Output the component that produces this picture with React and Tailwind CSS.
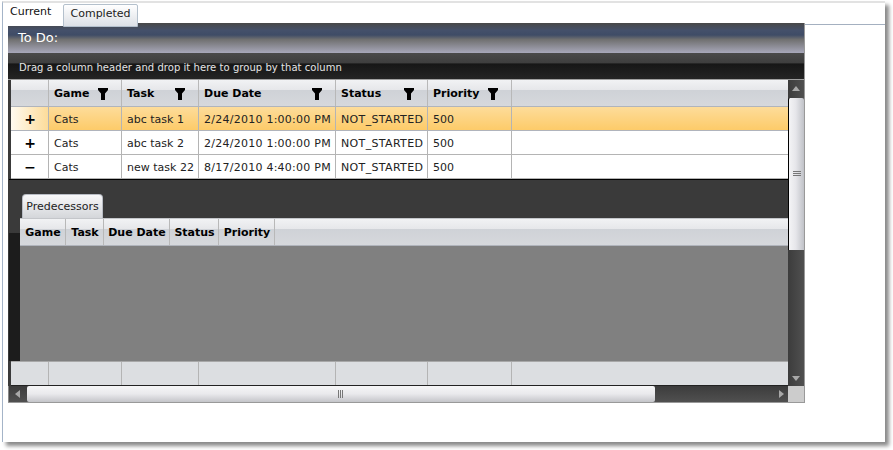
const COLS = "grid grid-cols-[38px_73px_77px_137px_92px_84px_1fr]";

function Funnel() {
  return (
    <svg width="14" height="14" viewBox="0 0 14 14" className="shrink-0">
      <path d="M2 1h10v2L9 6.5V13H5V6.5L2 3z" fill="#000" />
    </svg>
  );
}

function Tri({ d }) {
  return (
    <svg width="10" height="10" viewBox="0 0 10 10">
      <path d={d} fill="#a8a8a8" />
    </svg>
  );
}

const headers = [
  ["Game", "w-[73px]"],
  ["Task", "w-[77px]"],
  ["Due Date", "w-[137px]"],
  ["Status", "w-[92px]"],
  ["Priority", "w-[84px]"],
];

const rows = [
  { sign: "+", task: "abc task 1", date: "2/24/2010 1:00:00 PM", sel: true },
  { sign: "+", task: "abc task 2", date: "2/24/2010 1:00:00 PM" },
  { sign: "−", task: "new task 22", date: "8/17/2010 4:40:00 PM" },
];

const innerHeaders = [
  ["Game", "w-[46px]"],
  ["Task", "w-[38px]"],
  ["Due Date", "w-[66px]"],
  ["Status", "w-[49px]"],
  ["Priority", "w-[56px]"],
];

const HEAD_BG =
  "bg-[linear-gradient(to_bottom,#f1f2f4_0%,#e6e7ea_38%,#cfd2d7_40%,#d6d8dc_100%)]";

export default function App() {
  return (
    <div className="w-[893px] h-[450px] bg-white overflow-hidden font-['DejaVu_Sans',sans-serif] text-[11px] text-[#222]">
      <div className="ml-[2px] mt-px w-[883px] h-[441px] bg-white border-l border-[#a4b4c8] border-t-2 border-t-[#e2e2e2] shadow-[4px_4px_4px_#8a8a8a]">
        <div className="flex h-[20px] relative z-10 items-start">
          <div className="w-[60px] h-[23px] bg-white pl-[7px] pt-[1px] text-[11px] text-[#111]">Current</div>
          <div className="w-[75px] h-[23px] mt-px rounded-t-[2px] border border-[#b4c0cc] bg-[linear-gradient(to_bottom,#ffffff,#dde0e5)] text-center pt-[1px] text-[#222]">
            Completed
          </div>
        </div>
        <div className="flex">
          <div className="ml-[5px] w-[797px] h-[380px] shrink-0 border-r border-b border-[#999] flex flex-col">
            <div className="h-[30px] shrink-0 pl-[10px] pt-[5px] text-[13px] text-white bg-[linear-gradient(to_bottom,#484848_0%,#44506a_25%,#3f4c66_40%,#707070_55%,#a8a8ba_100%)]">
              To Do:
            </div>
            <div className="h-[27px] shrink-0 pl-[11px] pt-[7px] text-[10px] tracking-[0.05px] text-[#e4e4e4] border-b border-[#a0a0a0] bg-[linear-gradient(to_bottom,#4a4a4a_0%,#3e3e3e_38%,#161616_42%,#242424_100%)]">
              Drag a column header and drop it here to group by that column
            </div>
            <div className="flex h-[306px] shrink-0">
              <div className="w-[780px] shrink-0 flex flex-col border-l-[3px] border-l-[#3a3a3a]">
                <div className={`h-[27px] shrink-0 border-b border-[#b0b4bc] flex ${HEAD_BG}`}>
                  <div className="w-[38px] border-r border-[#b8b8b8] shrink-0" />
                  {headers.map(([t, w]) => (
                    <div key={t} className={`${w} shrink-0 border-r border-[#b8b8b8] flex items-center justify-between pl-[5px] pr-[11px] pt-[2px] font-bold text-black`}>
                      <span>{t}</span>
                      <Funnel />
                    </div>
                  ))}
                </div>
                {rows.map((r) => (
                  <div
                    key={r.task}
                    className={`${COLS} h-[24px] shrink-0 border-b ${r.sel ? "border-[#b0b4bc] bg-[linear-gradient(to_bottom,#fddc9a,#fdcb69)]" : "border-[#b4b4b4] bg-white"} last:border-b-0`}
                  >
                    <div className={`border-r border-[#b4b4b4] flex items-center justify-center pl-px pt-px text-[14px] font-bold text-black ${r.sel ? "bg-[linear-gradient(to_right,#fffaf0,#fddc9a)]" : ""}`}>
                      {r.sign}
                    </div>
                    <div className="border-r border-[#b4b4b4] flex items-center pl-[5px] pt-[3px]">Cats</div>
                    <div className="border-r border-[#b4b4b4] flex items-center pl-[5px] pt-[3px] whitespace-nowrap">{r.task}</div>
                    <div className="border-r border-[#b4b4b4] flex items-center pl-[5px] pt-[3px] whitespace-nowrap tracking-[0.25px]">{r.date}</div>
                    <div className="border-r border-[#b4b4b4] flex items-center pl-[5px] pt-[3px] tracking-[0.35px]">NOT_STARTED</div>
                    <div className="border-r border-[#b4b4b4] flex items-center pl-[5px] pt-[3px]">500</div>
                    <div />
                  </div>
                ))}
                <div className="h-[182px] shrink-0 -ml-[2px] border-t border-black bg-[linear-gradient(to_bottom,#3a3a3a_0%,#3a3a3a_29%,#1c1c1c_29.5%,#1c1c1c_100%)] flex">
                  <div className="w-[11px] shrink-0" />
                  <div className="flex-1 flex flex-col bg-[#3a3a3a]">
                    <div className="h-[38px] shrink-0 flex items-end pl-[2px]">
                      <div className="w-[81px] h-[24px] rounded-t-[4px] border border-[#b8bcc4] border-b-0 bg-[linear-gradient(to_bottom,#f8f8f9,#d4d6da)] flex items-center justify-center pt-[2px] text-[#222]">
                        Predecessors
                      </div>
                    </div>
                    <div className={`h-[28px] shrink-0 flex border-b border-[#b0b4bc] border-t border-t-[#c4c6ca] ${HEAD_BG}`}>
                      {innerHeaders.map(([t, w]) => (
                        <div key={t} className={`${w} shrink-0 border-r border-[#b8b8b8] flex items-center justify-center pl-px pt-[2px] font-bold text-black whitespace-nowrap`}>
                          {t}
                        </div>
                      ))}
                    </div>
                    <div className="flex-1 bg-[#808080]" />
                  </div>
                </div>
                <div className={`${COLS} h-[25px] shrink-0 bg-[#dcdee1] border-t border-[#a8a8a8] border-b border-b-[#222]`}>
                  {[0, 1, 2, 3, 4, 5].map((i) => (
                    <div key={i} className="border-r border-[#b4b4b4]" />
                  ))}
                  <div />
                </div>
              </div>
              <div className="w-[16px] shrink-0 flex flex-col bg-[linear-gradient(to_right,#3c3c3c,#505050)]">
                <div className="h-[18px] shrink-0 flex items-center justify-center">
                  <Tri d="M5 2L9 7H1z" />
                </div>
                <div className="h-[152px] shrink-0 rounded-t-[2px] border-l border-black bg-[linear-gradient(to_right,#f4f4f6,#e6e6ea_45%,#c0c2c8)] flex items-center justify-center">
                  <svg width="8" height="6" viewBox="0 0 8 6">
                    <path d="M0 .5h8M0 2.5h8M0 4.5h8" stroke="#777" strokeWidth="1" />
                  </svg>
                </div>
                <div className="flex-1" />
                <div className="h-[16px] shrink-0 flex items-center justify-center">
                  <Tri d="M1 3h8L5 8z" />
                </div>
              </div>
            </div>
            <div className="flex h-[16px] shrink-0 bg-[linear-gradient(to_bottom,#3c3c3c,#505050)] border-l border-[#888]">
              <div className="w-[18px] shrink-0 flex items-center justify-center">
                <Tri d="M7 1v8L2 5z" />
              </div>
              <div className="w-[628px] shrink-0 rounded-[2px] bg-[linear-gradient(to_bottom,#f6f6f7,#e9e9ec_50%,#c4c5c9)] flex items-center justify-center">
                <svg width="6" height="8" viewBox="0 0 6 8">
                  <path d="M.5 0v8M2.5 0v8M4.5 0v8" stroke="#777" strokeWidth="1" />
                </svg>
              </div>
              <div className="flex-1 flex items-center justify-end pr-[2px]">
                <Tri d="M3 1v8L8 5z" />
              </div>
              <div className="w-[16px] shrink-0 bg-[#cccccc]" />
            </div>
          </div>
          <div className="flex-1 mt-px border-t border-[#a4b0c0]" />
        </div>
      </div>
    </div>
  );
}
